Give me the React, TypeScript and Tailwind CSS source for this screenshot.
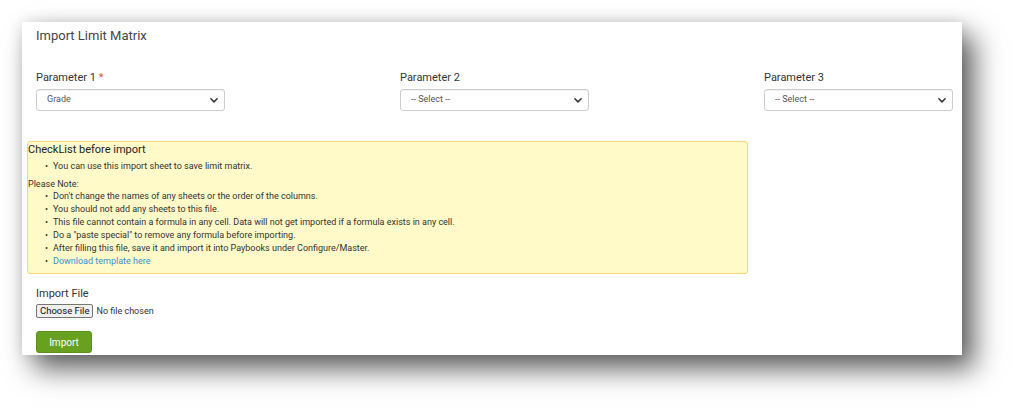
import React from 'react';

function Chevron() {
  return (
    <span className="absolute inset-y-0 right-[6px] flex items-center pointer-events-none">
      <svg width="10" height="10" viewBox="0 0 16 16">
        <path d="M3 6l5 5 5-5" fill="none" stroke="#333" strokeWidth="2.4" strokeLinecap="round" strokeLinejoin="round" />
      </svg>
    </span>
  );
}

interface ParamProps {
  label: string;
  value: string;
  required?: boolean;
}

function Param({ label, value, required }: ParamProps) {
  return (
    <div className="flex flex-col">
      <label className="text-[11px] text-[#333] leading-[14px] mb-[4px]">
        {label}
        {required && <span className="text-[#d9534f]"> *</span>}
      </label>
      <div className="relative w-[189px] h-[22px]">
        <select
          defaultValue={value}
          className="block appearance-none w-full h-full border border-[#ccc] rounded-[3px] bg-white pl-[10px] text-[9px] text-[#555] shadow-[inset_0_1px_1px_rgba(0,0,0,0.06)] outline-none"
        >
          <option>{value}</option>
        </select>
        <Chevron />
      </div>
    </div>
  );
}

const notes = [
  "Don't change the names of any sheets or the order of the columns.",
  'You should not add any sheets to this file.',
  'This file cannot contain a formula in any cell. Data will not get imported if a formula exists in any cell.',
  'Do a "paste special" to remove any formula before importing.',
  'After filling this file, save it and import it into Paybooks under Configure/Master.',
];

function Bullet({ children, link }: { children: React.ReactNode; link?: boolean }) {
  return (
    <li className="flex items-start h-[13px]">
      <span className="w-[25px] text-right pr-[5px] text-[#333]">•</span>
      <span className={link ? 'text-[#3a8fd0]' : 'text-[#333]'}>{children}</span>
    </li>
  );
}

export default function App() {
  return (
    <div className="w-[1017px] h-[411px] bg-white pt-[22px] pl-[22px]" style={{ fontFamily: 'Roboto, "Liberation Sans", sans-serif' }}>
      <div className="w-[940px] h-[333px] bg-white shadow-[12px_14px_26px_rgba(0,0,0,0.62),0_0_14px_rgba(0,0,0,0.12)] relative">
        <div className="pl-[14px] pt-[6px]">
          <h1 className="text-[13px] text-[#444] leading-[16px]">Import Limit Matrix</h1>
          <div className="grid grid-cols-[364px_364px_200px] mt-[27px]">
            <Param label="Parameter 1" value="Grade" required />
            <Param label="Parameter 2" value="-- Select --" />
            <Param label="Parameter 3" value="-- Select --" />
          </div>
        </div>

        <div className="ml-[5px] mt-[30px] w-[721px] h-[133px] bg-[#fffac8] border border-[#f6d873] rounded-[3px] text-[9px] leading-[13px] pt-[1px]">
          <div className="text-[11px] leading-[14px] text-[#222]">CheckList before import</div>
          <ul className="mt-[3px]">
            <Bullet>You can use this import sheet to save limit matrix.</Bullet>
          </ul>
          <div className="text-[#333] mt-[6px] h-[11px] leading-[11px]">Please Note:</div>
          <ul>
            {notes.map((n) => (
              <Bullet key={n}>{n}</Bullet>
            ))}
            <Bullet link>Download template here</Bullet>
          </ul>
        </div>

        <div className="pl-[14px] mt-[13px]">
          <div className="text-[11px] text-[#333] leading-[14px]">Import File</div>
          <input
            type="file"
            className="block mt-[3px] h-[14px] text-[9px] leading-[12px] text-[#333] file:h-[14px] file:mr-[3px] file:px-[3px] file:border file:border-[#767676] file:rounded-[2px] file:bg-[#efefef] file:text-[9.5px] file:text-[#111]"
          />
          <button className="mt-[13px] w-[56px] h-[22px] rounded-[3px] bg-[#67a11f] border border-[#5a9119] text-white text-[10px]">
            Import
          </button>
        </div>
      </div>
    </div>
  );
}
